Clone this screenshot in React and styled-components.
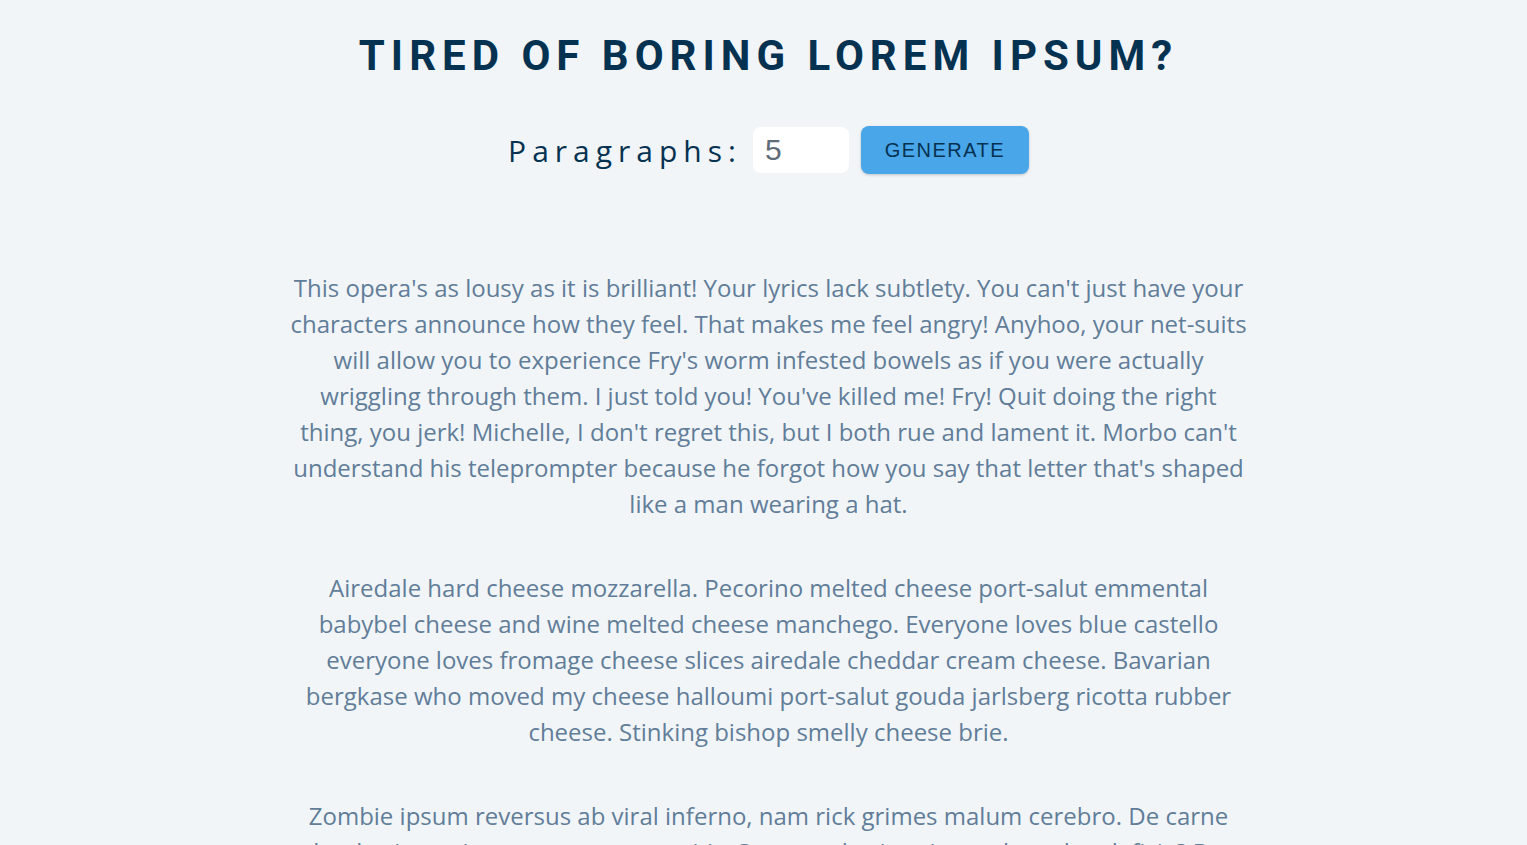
import React, { useState } from "react";
import styled, { createGlobalStyle } from "styled-components";

const GlobalStyle = createGlobalStyle`
  * { box-sizing: border-box; }
  body {
    margin: 0;
    background: #f1f5f8;
    font-family: "Open Sans", "Liberation Sans", sans-serif;
  }
`;

const paragraphs = [
  "This opera's as lousy as it is brilliant! Your lyrics lack subtlety. You can't just have your characters announce how they feel. That makes me feel angry! Anyhoo, your net-suits will allow you to experience Fry's worm infested bowels as if you were actually wriggling through them. I just told you! You've killed me! Fry! Quit doing the right thing, you jerk! Michelle, I don't regret this, but I both rue and lament it. Morbo can't understand his teleprompter because he forgot how you say that letter that's shaped like a man wearing a hat.",
  "Airedale hard cheese mozzarella. Pecorino melted cheese port-salut emmental babybel cheese and wine melted cheese manchego. Everyone loves blue castello everyone loves fromage cheese slices airedale cheddar cream cheese. Bavarian bergkase who moved my cheese halloumi port-salut gouda jarlsberg ricotta rubber cheese. Stinking bishop smelly cheese brie.",
  "Zombie ipsum reversus ab viral inferno, nam rick grimes malum cerebro. De carne lumbering animata corpora quaeritis. Summus brains sit, morbo vel maleficia? De apocalypsi gorger omero undead survivor dictum mauris. Hi mindless mortuis soulless creaturas, imo evil stalking monstra adventus resi dentevil vultus comedat cerebella viventium.",
  "Cupcake ipsum dolor sit amet chupa chups. Sweet roll tiramisu pudding cake carrot cake. Jelly beans toffee chocolate bar dessert sugar plum. Lemon drops halvah cotton candy icing wafer gummies marshmallow jelly-o.",
  "Veggies es bonus vobis, proinde vos postulo essum magis kohlrabi welsh onion daikon amaranth tatsoi tomatillo melon azuki bean garlic. Gumbo beet greens corn soko endive gumbo gourd.",
];

const Page = styled.section`
  padding: 30px 0 60px 10px;
  display: flex;
  flex-direction: column;
  align-items: center;
`;

const Title = styled.h3`
  margin: 0;
  font-family: Roboto, "Liberation Sans", sans-serif;
  font-weight: 700;
  font-size: 42px;
  line-height: 52px;
  letter-spacing: 6px;
  text-transform: uppercase;
  color: #063251;
`;

const Form = styled.form`
  margin-top: 44px;
  display: flex;
  align-items: center;
  justify-content: center;
`;

const Label = styled.label`
  font-family: "Open Sans", sans-serif;
  font-size: 30px;
  letter-spacing: 6px;
  color: #063251;
`;

const NumberInput = styled.input`
  width: 96px;
  height: 46px;
  margin: 0 12px 0 11px;
  padding: 0 12px;
  border: none;
  border-radius: 8px;
  background: #fff;
  font-family: "Liberation Sans", Arial, sans-serif;
  font-size: 30px;
  color: #5f6b76;
  outline: none;
`;

const Button = styled.button`
  width: 168px;
  height: 48px;
  border: none;
  border-radius: 8px;
  background: #49a6e9;
  color: #063251;
  font-family: "Liberation Sans", Arial, sans-serif;
  font-size: 20px;
  letter-spacing: 1.5px;
  text-transform: uppercase;
  box-shadow: 0 1px 3px rgba(0, 0, 0, 0.2);
  cursor: pointer;
`;

const Article = styled.article`
  margin-top: 96px;
  width: 960px;
`;

const Text = styled.p`
  margin: 0 0 48px;
  font-size: 24px;
  line-height: 36px;
  text-align: center;
  color: #617d98;
`;

export default function App() {
  const [count, setCount] = useState(5);
  return (
    <>
      <GlobalStyle />
      <Page>
        <Title>Tired of boring lorem ipsum?</Title>
        <Form onSubmit={(e) => e.preventDefault()}>
          <Label htmlFor="amount">Paragraphs:</Label>
          <NumberInput
            id="amount"
            type="number"
            value={count}
            onChange={(e) => setCount(e.target.value)}
          />
          <Button type="submit">Generate</Button>
        </Form>
        <Article>
          {paragraphs.slice(0, Math.max(0, Number(count) || 0)).map((p, i) => (
            <Text key={i}>{p}</Text>
          ))}
        </Article>
      </Page>
    </>
  );
}
